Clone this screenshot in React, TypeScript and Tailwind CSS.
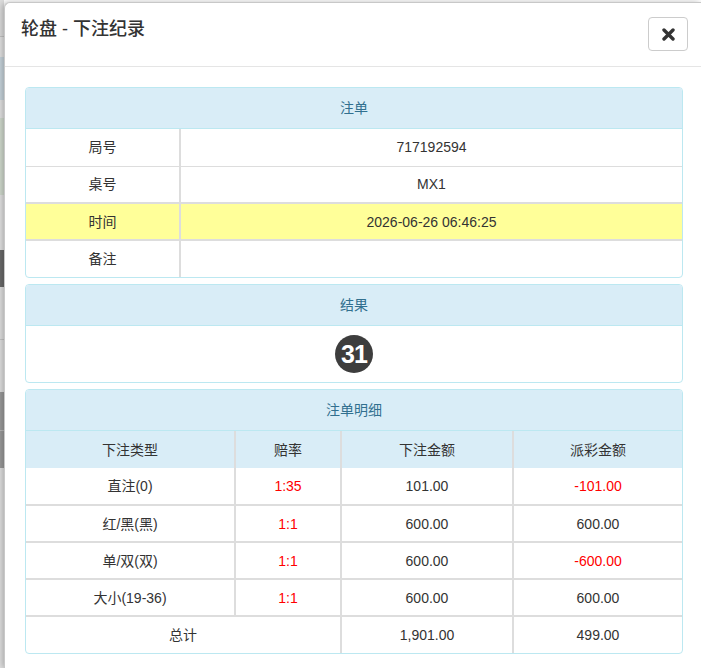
const font = "font-['Liberation_Sans','Noto_Sans_CJK_SC',sans-serif]";

const bets = [
  { type: "直注(0)", odds: "1:35", amount: "101.00", payout: "-101.00", neg: true },
  { type: "红/黑(黑)", odds: "1:1", amount: "600.00", payout: "600.00", neg: false },
  { type: "单/双(双)", odds: "1:1", amount: "600.00", payout: "-600.00", neg: true },
  { type: "大小(19-36)", odds: "1:1", amount: "600.00", payout: "600.00", neg: false },
];

function PanelHeading({ title }: { title: string }) {
  return (
    <div className="h-[41px] bg-[#d9edf7] border-b border-[#bce8f1] flex items-center justify-center text-[#31708f] text-sm rounded-t-[3px]">
      {title}
    </div>
  );
}

function CloseIcon() {
  return (
    <svg width="13" height="13" viewBox="0 0 13 13">
      <path d="M2 2 L11 11 M11 2 L2 11" stroke="#333" strokeWidth="3.4" strokeLinecap="round" />
    </svg>
  );
}

export default function App() {
  return (
    <div className={`w-[701px] h-[668px] overflow-hidden flex bg-white text-[#333] ${font}`}>
      {/* backdrop strip */}
      <div className="w-[4px] shrink-0 flex flex-col">
        <div className="h-[37px] bg-[#dedede] border-b border-[#c4c4c4]" />
        <div className="h-[20px] bg-[#e4e4e4]" />
        <div className="h-[43px] bg-[#c9d6de]" />
        <div className="h-[18px] bg-[#e4e4e4]" />
        <div className="h-[77px] bg-[#d3ddd0]" />
        <div className="h-[55px] bg-[#e4e4e4]" />
        <div className="h-[37px] bg-[#6b6b6b]" />
        <div className="h-[53px] bg-[#e2e2e2] border-b border-[#c8c8c8]" />
        <div className="h-[52px] bg-[#e2e2e2]" />
        <div className="h-[38px] bg-[#9c9c9c]" />
        <div className="h-[38px] bg-[#9c9c9c] border-t border-[#bbbbbb]" />
        <div className="flex-1 bg-[#e2e2e2]" />
      </div>

      {/* modal */}
      <div className="flex-1 mt-[2px] bg-white border-l border-t border-[#c8c8c8] rounded-tl-[6px] shadow-[-2px_0_6px_rgba(0,0,0,0.25)] flex flex-col">
        <div className="h-[64px] border-b border-[#e5e5e5] flex items-start justify-between pl-[16px] pr-[13px]">
          <h4 className="mt-[14px] text-[18px] font-medium leading-[24px]">轮盘 - 下注纪录</h4>
          <button className="mt-[14px] w-[40px] h-[34px] border border-[#ccc] rounded-[4px] bg-white flex items-center justify-center">
            <CloseIcon />
          </button>
        </div>

        <div className="pl-[20px] pr-[18px] pt-[20px] flex flex-col gap-[6px] text-sm">
          {/* 注单 */}
          <div className="border border-[#bce8f1] rounded-[4px]">
            <PanelHeading title="注单" />
            <table className="w-full border-collapse">
              <tbody>
                {[
                  ["局号", "717192594", false],
                  ["桌号", "MX1", false],
                  ["时间", "2026-06-26 06:46:25", true],
                  ["备注", "", false],
                ].map(([k, v, hl], i) => (
                  <tr
                    key={k as string}
                    className={`h-[37px] ${hl ? "bg-[#ffff99] border-y-2" : i > 0 ? "border-t" : ""} border-[#ddd]`}
                  >
                    <td className="w-[154px] text-center border-r-2 border-[#ddd] p-0">{k}</td>
                    <td className="text-center p-0">{v}</td>
                  </tr>
                ))}
              </tbody>
            </table>
          </div>

          {/* 结果 */}
          <div className="border border-[#bce8f1] rounded-[4px]">
            <PanelHeading title="结果" />
            <div className="h-[56px] flex items-center justify-center">
              <div className="w-[38px] h-[38px] rounded-full bg-[#3d3d3d] text-white flex items-center justify-center font-bold text-[25px] leading-none font-['Liberation_Sans_Narrow','Liberation_Sans',sans-serif] tracking-[-1px]">
                31
              </div>
            </div>
          </div>

          {/* 注单明细 */}
          <div className="border border-[#bce8f1] rounded-[4px]">
            <PanelHeading title="注单明细" />
            <table className="w-full border-collapse">
              <thead>
                <tr className="h-[37px] bg-[#d9edf7]">
                  <th className="w-[209px] font-normal border-r-2 border-[#ddd] p-0">下注类型</th>
                  <th className="w-[106px] font-normal border-r-2 border-[#ddd] p-0">赔率</th>
                  <th className="w-[172px] font-normal border-r-2 border-[#ddd] p-0">下注金额</th>
                  <th className="font-normal p-0">派彩金额</th>
                </tr>
              </thead>
              <tbody>
                {bets.map((b, i) => (
                  <tr key={b.type} className={`h-[37px] ${i > 0 ? "border-t-2" : ""} border-[#ddd]`}>
                    <td className="text-center border-r-2 border-[#ddd] p-0">{b.type}</td>
                    <td className="text-center border-r-2 border-[#ddd] p-0 text-[#ff0000]">{b.odds}</td>
                    <td className="text-center border-r-2 border-[#ddd] p-0">{b.amount}</td>
                    <td className={`text-center p-0 ${b.neg ? "text-[#ff0000]" : ""}`}>{b.payout}</td>
                  </tr>
                ))}
                <tr className="h-[37px] border-t-2 border-[#ddd]">
                  <td colSpan={2} className="text-center border-r-2 border-[#ddd] p-0">总计</td>
                  <td className="text-center border-r-2 border-[#ddd] p-0">1,901.00</td>
                  <td className="text-center p-0">499.00</td>
                </tr>
              </tbody>
            </table>
          </div>
        </div>
      </div>
    </div>
  );
}
